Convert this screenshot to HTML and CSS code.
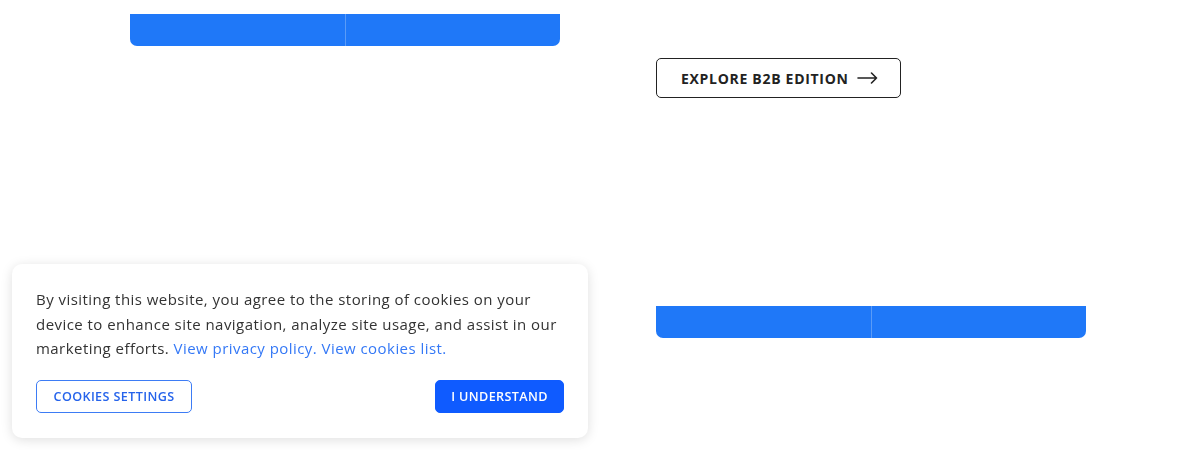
FILE: index.html
```html
<!DOCTYPE html>
<html lang="en">
<head>
<meta charset="utf-8">
<title>Page</title>
<link rel="stylesheet" href="styles.css">
</head>
<body>
<main class="page">
  <section class="col col-left">
    <div class="bar">
      <div class="bar-cell"></div>
      <div class="bar-cell"></div>
    </div>
  </section>
  <section class="col col-right">
    <a class="explore" href="#">EXPLORE B2B EDITION
      <svg class="arrow" width="21" height="12" viewBox="0 0 21 12" aria-hidden="true"><path d="M1 6H19.5M14.5 1L19.5 6L14.5 11" fill="none" stroke="#222" stroke-width="1.6" stroke-linecap="round" stroke-linejoin="round"/></svg>
    </a>
    <div class="bar bar-lower">
      <div class="bar-cell"></div>
      <div class="bar-cell"></div>
    </div>
  </section>
</main>
<div class="cookie">
  <p class="cookie-text">By visiting this website, you agree to the storing of cookies on your device to enhance site navigation, analyze site usage, and assist in our marketing efforts. <a href="#">View privacy policy. View cookies list.</a></p>
  <div class="cookie-actions">
    <button class="btn btn-outline">COOKIES SETTINGS</button>
    <button class="btn btn-solid">I UNDERSTAND</button>
  </div>
</div>
</body>
</html>
```
FILE: styles.css
```css
* { box-sizing: border-box; }
html, body { margin: 0; padding: 0; background: #fff; }
body { font-family: "Open Sans", Lato, sans-serif; color: #222; }
.page {
  display: flex;
  gap: 96px;
  padding: 14px 0 0 130px;
  height: 450px;
}
.col { width: 430px; display: flex; flex-direction: column; }
.bar {
  display: flex;
  height: 32px;
  border-radius: 0 0 7px 7px;
  overflow: hidden;
  background: #1f78f8;
}
.bar-cell { flex: 1; }
.bar-cell + .bar-cell { border-left: 1px solid #5a9bf7; }
.col-right { padding-top: 44px; align-items: flex-start; }
.explore {
  display: flex;
  align-items: center;
  gap: 8px;
  height: 40px;
  width: 245px;
  padding: 0 0 0 24px;
  border: 1px solid #222;
  border-radius: 5px;
  color: #222;
  text-decoration: none;
  font-weight: 700;
  font-size: 14px;
  letter-spacing: 0.7px;
  white-space: nowrap;
}
.arrow { flex: none; }
.bar-lower { width: 430px; margin-top: 208px; }
.cookie {
  position: fixed;
  left: 12px;
  top: 264px;
  width: 576px;
  height: 174px;
  background: #fff;
  border-radius: 10px;
  box-shadow: 0 2px 12px rgba(0,0,0,0.13);
  padding: 23px 24px 24px;
}
.cookie-text {
  margin: 0;
  font-size: 15px;
  line-height: 24.5px;
  letter-spacing: 0.45px;
  color: #333;
}
.cookie-text a { color: #3478f6; text-decoration: none; }
.cookie-actions {
  display: flex;
  justify-content: space-between;
  margin-top: 19px;
}
.btn {
  height: 33px;
  border-radius: 5px;
  font-family: "Open Sans", Lato, sans-serif;
  font-weight: 600;
  font-size: 12.6px;
  letter-spacing: 0.38px;
  padding: 0;
  white-space: nowrap;
}
.btn-outline { width: 156px; background: #fff; color: #2563eb; border: 1px solid #3d7cf5; }
.btn-solid { width: 129px; background: #0f5bff; color: #fff; border: 1px solid #0f5bff; }
```
